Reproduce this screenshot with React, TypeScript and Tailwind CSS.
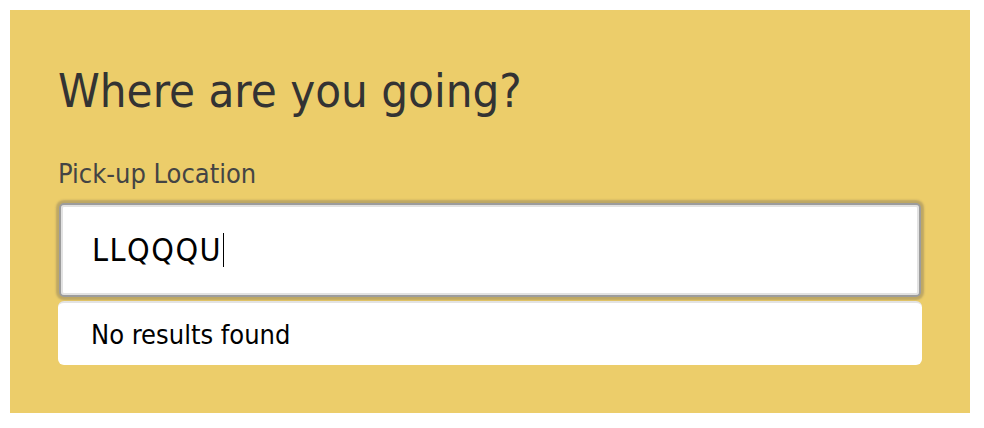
export default function App() {
    return (
        <div className="p-[10px] bg-white" style={{ fontFamily: '"DejaVu Sans Condensed", "DejaVu Sans", Verdana, sans-serif' }}>
            <div className="bg-[#eccd6a] w-[960px] pt-[57px] px-[48px] pb-[48px] [font-stretch:condensed]">
                <h1 className="text-[47px] leading-none text-[#333333]">Where are you going?</h1>

                <label className="block mt-[46px] text-[27px] leading-none text-[#444444]">Pick-up Location</label>

                {/* focused search field with a visible caret */}
                <div className="mt-4 mx-px h-[94px] flex items-center rounded-[5px] border-2 border-[#9c9c9c] bg-white pl-[31px] shadow-[0_0_2px_3px_rgba(120,110,90,0.4),inset_0_0_0_2px_#e2e2e2]">
                    <span className="text-[32px] leading-none tracking-[1.5px] text-black">LLQQQU</span>
                    <span className="ml-[1px] w-px h-[34px] bg-black" />
                </div>

                {/* empty result list */}
                <div className="mt-1 h-[64px] flex items-center rounded-[6px] bg-white border-t-2 border-[#e3e3e3] pl-[33px]">
                    <span className="text-[27px] leading-none text-black">No results found</span>
                </div>
            </div>
        </div>
    );
}
